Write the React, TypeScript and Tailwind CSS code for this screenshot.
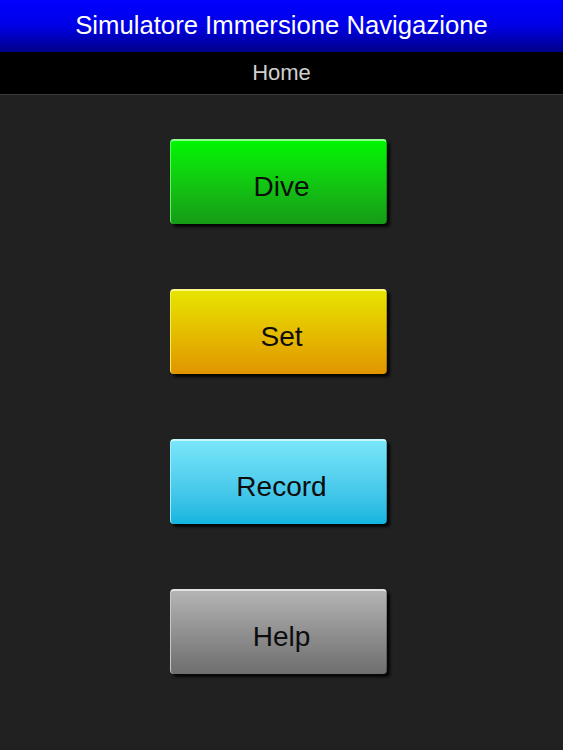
const buttons = [
  { label: "Dive", bg: "bg-gradient-to-b from-[#00f600] to-[#169b16]", edge: "border-t-[#8cff8c] border-l-[#5ef55e]" },
  { label: "Set", bg: "bg-gradient-to-b from-[#e6e400] to-[#e09500]", edge: "border-t-[#fff88a] border-l-[#f2ee5a]" },
  { label: "Record", bg: "bg-gradient-to-b from-[#78e6fa] to-[#0fb5df]", edge: "border-t-[#c8f6ff] border-l-[#a0eefc]" },
  { label: "Help", bg: "bg-gradient-to-b from-[#b4b4b4] to-[#6e6e6e]", edge: "border-t-[#e2e2e2] border-l-[#c8c8c8]" },
];

const App = () => {
  return (
    <div className="w-[563px] h-[750px] bg-[#212121] flex flex-col" style={{ fontFamily: '"Liberation Sans", Arial, sans-serif' }}>
      <header className="h-[52px] bg-gradient-to-b from-[#0000ff] via-[#0000e6] to-[#00008a] flex items-center justify-center">
        <h1 className="text-white text-[25.7px] leading-none">Simulatore Immersione Navigazione</h1>
      </header>
      <div className="h-[43px] bg-black flex items-center justify-center border-b border-[#3a3a3a]">
        <span className="text-[#cfcfcf] text-[22px] leading-none">Home</span>
      </div>
      <main className="flex flex-col items-center pt-[44px] gap-[65px]">
        {buttons.map((b) => (
          <button
            key={b.label}
            className={`w-[217px] h-[85px] rounded-[4px] border-t-2 border-l border-r border-b-0 border-r-[#00000040] ${b.edge} ${b.bg} shadow-[3px_3px_3px_rgba(0,0,0,0.85)] flex items-center justify-center pt-2 pl-[6px] text-[#0d0d0d] text-[28px] mr-[6px]`}
          >
            {b.label}
          </button>
        ))}
      </main>
    </div>
  );
};

export default App;
